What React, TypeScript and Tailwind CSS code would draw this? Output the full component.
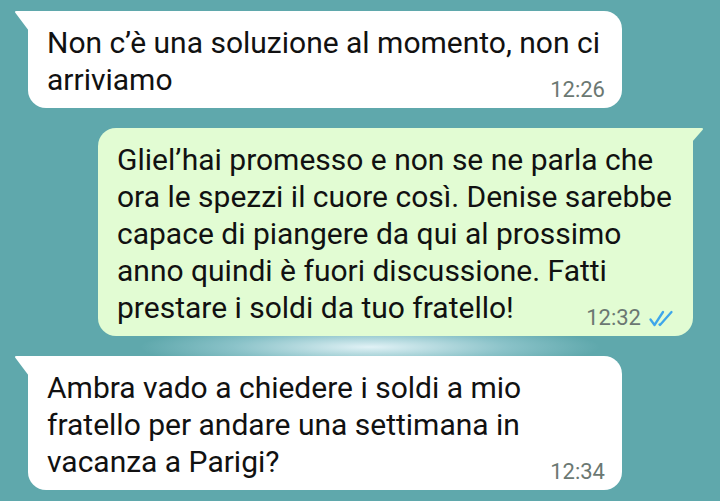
import React from "react"

const font = { fontFamily: "Roboto, 'Noto Sans', sans-serif" }

function TailLeft({ color }: { color: string }) {
  return (
    <svg className="absolute -left-[14px] top-0" width="15" height="20" viewBox="0 0 15 20">
      <path d="M15 0 L2.5 0 Q0 0 1.5 2 L15 20 Z" fill={color} />
    </svg>
  )
}

function TailRight({ color }: { color: string }) {
  return (
    <svg className="absolute -right-[11px] top-0" width="12" height="14" viewBox="0 0 12 14">
      <path d="M0 0 L9.5 0 Q12 0 10.5 2 L0 14 Z" fill={color} />
    </svg>
  )
}

function Checks() {
  return (
    <svg width="26" height="17" viewBox="0 0 26 17" fill="none" stroke="#3ea6ea" strokeWidth="2.3" strokeLinecap="round" strokeLinejoin="round">
      <path d="M2.5 9.5 L6.5 15 L15 2" />
      <path d="M11.5 14.5 L12 15 L23.5 2" />
    </svg>
  )
}

type Msg = {
  lines: string[]
  time: string
  out?: boolean
}

const messages: Msg[] = [
  {
    lines: ["Non c’è una soluzione al momento, non ci", "arriviamo"],
    time: "12:26",
  },
  {
    lines: [
      "Gliel’hai promesso e non se ne parla che",
      "ora le spezzi il cuore così. Denise sarebbe",
      "capace di piangere da qui al prossimo",
      "anno quindi è fuori discussione. Fatti",
      "prestare i soldi da tuo fratello!",
    ],
    time: "12:32",
    out: true,
  },
  {
    lines: ["Ambra vado a chiedere i soldi a mio", "fratello per andare una settimana in", "vacanza a Parigi?"],
    time: "12:34",
  },
]

function Bubble({ msg }: { msg: Msg }) {
  const color = msg.out ? "#e2fcd3" : "#ffffff"
  const last = msg.lines[msg.lines.length - 1]
  const rest = msg.lines.slice(0, -1)

  return (
    <div
      className={
        msg.out
          ? "relative ml-[98px] w-[595px] rounded-[18px] rounded-tr-none bg-[#e2fcd3] pl-[19px] pr-[19px] pt-[13px] pb-[10px]"
          : "relative ml-[28px] w-[594px] rounded-[18px] rounded-tl-none bg-white pl-[19px] pr-[17px] pt-[13px] pb-[10px]"
      }
    >
      {msg.out ? <TailRight color={color} /> : <TailLeft color={color} />}
      <div className="text-[30px] leading-[37px] text-[#111111]" style={font}>
        {rest.map((l) => (
          <div key={l} className="whitespace-nowrap">{l}</div>
        ))}
        <div className="flex items-end justify-between">
          <span className="whitespace-nowrap">{last}</span>
          <span className="flex items-center gap-[7px] translate-y-[4px]">
            <span className="text-[22px] leading-[24px] text-[#6b7872]">{msg.time}</span>
            {msg.out && <Checks />}
          </span>
        </div>
      </div>
    </div>
  )
}

export default function App() {
  return (
    <div className="relative h-[501px] w-[720px] overflow-hidden bg-[#5fa8ac] bg-[radial-gradient(ellipse_230px_24px_at_370px_347px,rgba(232,246,250,0.95),rgba(180,220,228,0.5)_60%,transparent)]">
      <div className="flex flex-col gap-[20px] pt-[11px]">
        {messages.map((m) => (
          <Bubble key={m.time} msg={m} />
        ))}
      </div>
    </div>
  )
}
